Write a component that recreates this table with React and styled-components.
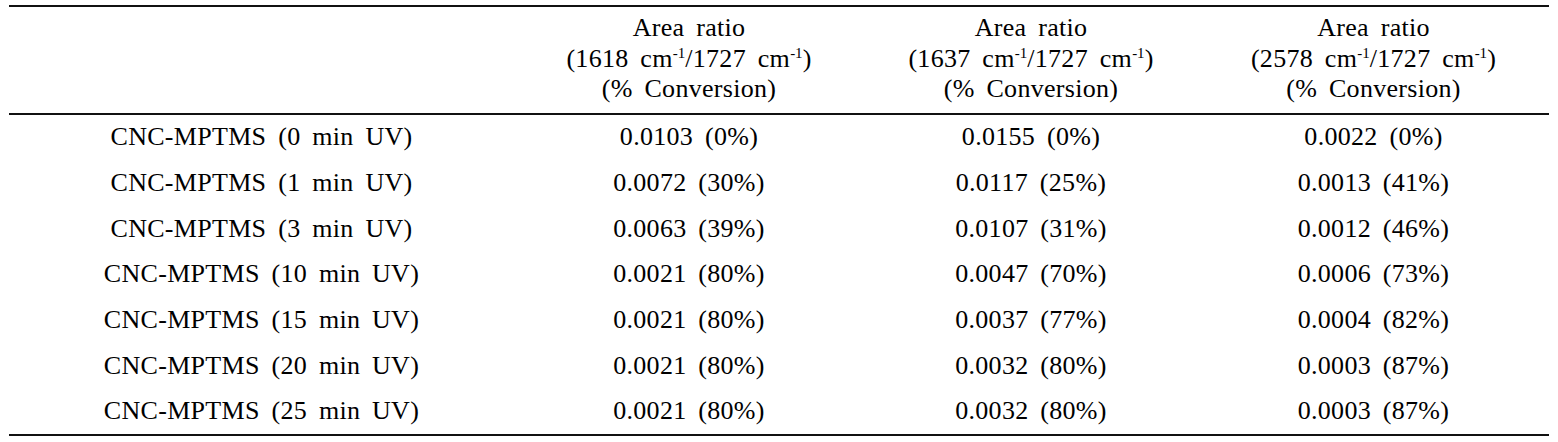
import React from 'react';
import styled, { createGlobalStyle } from 'styled-components';

const GlobalStyle = createGlobalStyle`
  body {
    margin: 0;
    background: #fff;
    font-family: "Liberation Serif", "DejaVu Serif", serif;
    color: #000;
  }
`;

const Page = styled.div`
  padding: 5px 9px 0 9px;
`;

const Table = styled.table`
  width: 1540px;
  border-collapse: collapse;
  table-layout: fixed;
  font-family: "Liberation Serif", "DejaVu Serif", serif;
  font-size: 26px;
  letter-spacing: 0.3px;
  word-spacing: 5px;
  color: #000;
`;

const Head = styled.thead`
  border-top: 2px solid #111;
  border-bottom: 2px solid #111;
`;

const Body = styled.tbody`
  border-bottom: 2px solid #111;
`;

const HeadCell = styled.th`
  font-weight: normal;
  text-align: center;
  vertical-align: middle;
  line-height: 30.5px;
  padding: 6px 0 8px;
  height: 91px;
`;

const Cell = styled.td`
  text-align: center;
  vertical-align: middle;
  height: 45.7px;
  padding: 0;
  line-height: 30px;
`;

const Sup = styled.sup`
  font-size: 15px;
  line-height: 0;
  vertical-align: 9px;
  letter-spacing: 0;
  word-spacing: 0;
`;

const columns = [
  { from: '1618', width: 350 },
  { from: '1637', width: 334 },
  { from: '2578', width: 351 },
];

const rows = [
  ['0', '0.0103 (0%)', '0.0155 (0%)', '0.0022 (0%)'],
  ['1', '0.0072 (30%)', '0.0117 (25%)', '0.0013 (41%)'],
  ['3', '0.0063 (39%)', '0.0107 (31%)', '0.0012 (46%)'],
  ['10', '0.0021 (80%)', '0.0047 (70%)', '0.0006 (73%)'],
  ['15', '0.0021 (80%)', '0.0037 (77%)', '0.0004 (82%)'],
  ['20', '0.0021 (80%)', '0.0032 (80%)', '0.0003 (87%)'],
  ['25', '0.0021 (80%)', '0.0032 (80%)', '0.0003 (87%)'],
];

const App = () => (
  <Page>
    <GlobalStyle />
    <Table>
      <colgroup>
        <col style={{ width: 505 }} />
        {columns.map((c) => (
          <col key={c.from} style={{ width: c.width }} />
        ))}
      </colgroup>
      <Head>
        <tr>
          <HeadCell />
          {columns.map((c) => (
            <HeadCell key={c.from}>
              Area ratio
              <br />
              ({c.from} cm<Sup>-1</Sup>/1727 cm<Sup>-1</Sup>)
              <br />
              (% Conversion)
            </HeadCell>
          ))}
        </tr>
      </Head>
      <Body>
        {rows.map(([min, ...vals]) => (
          <tr key={min}>
            <Cell>CNC-MPTMS ({min} min UV)</Cell>
            {vals.map((v, i) => (
              <Cell key={i}>{v}</Cell>
            ))}
          </tr>
        ))}
      </Body>
    </Table>
  </Page>
);

export default App;
